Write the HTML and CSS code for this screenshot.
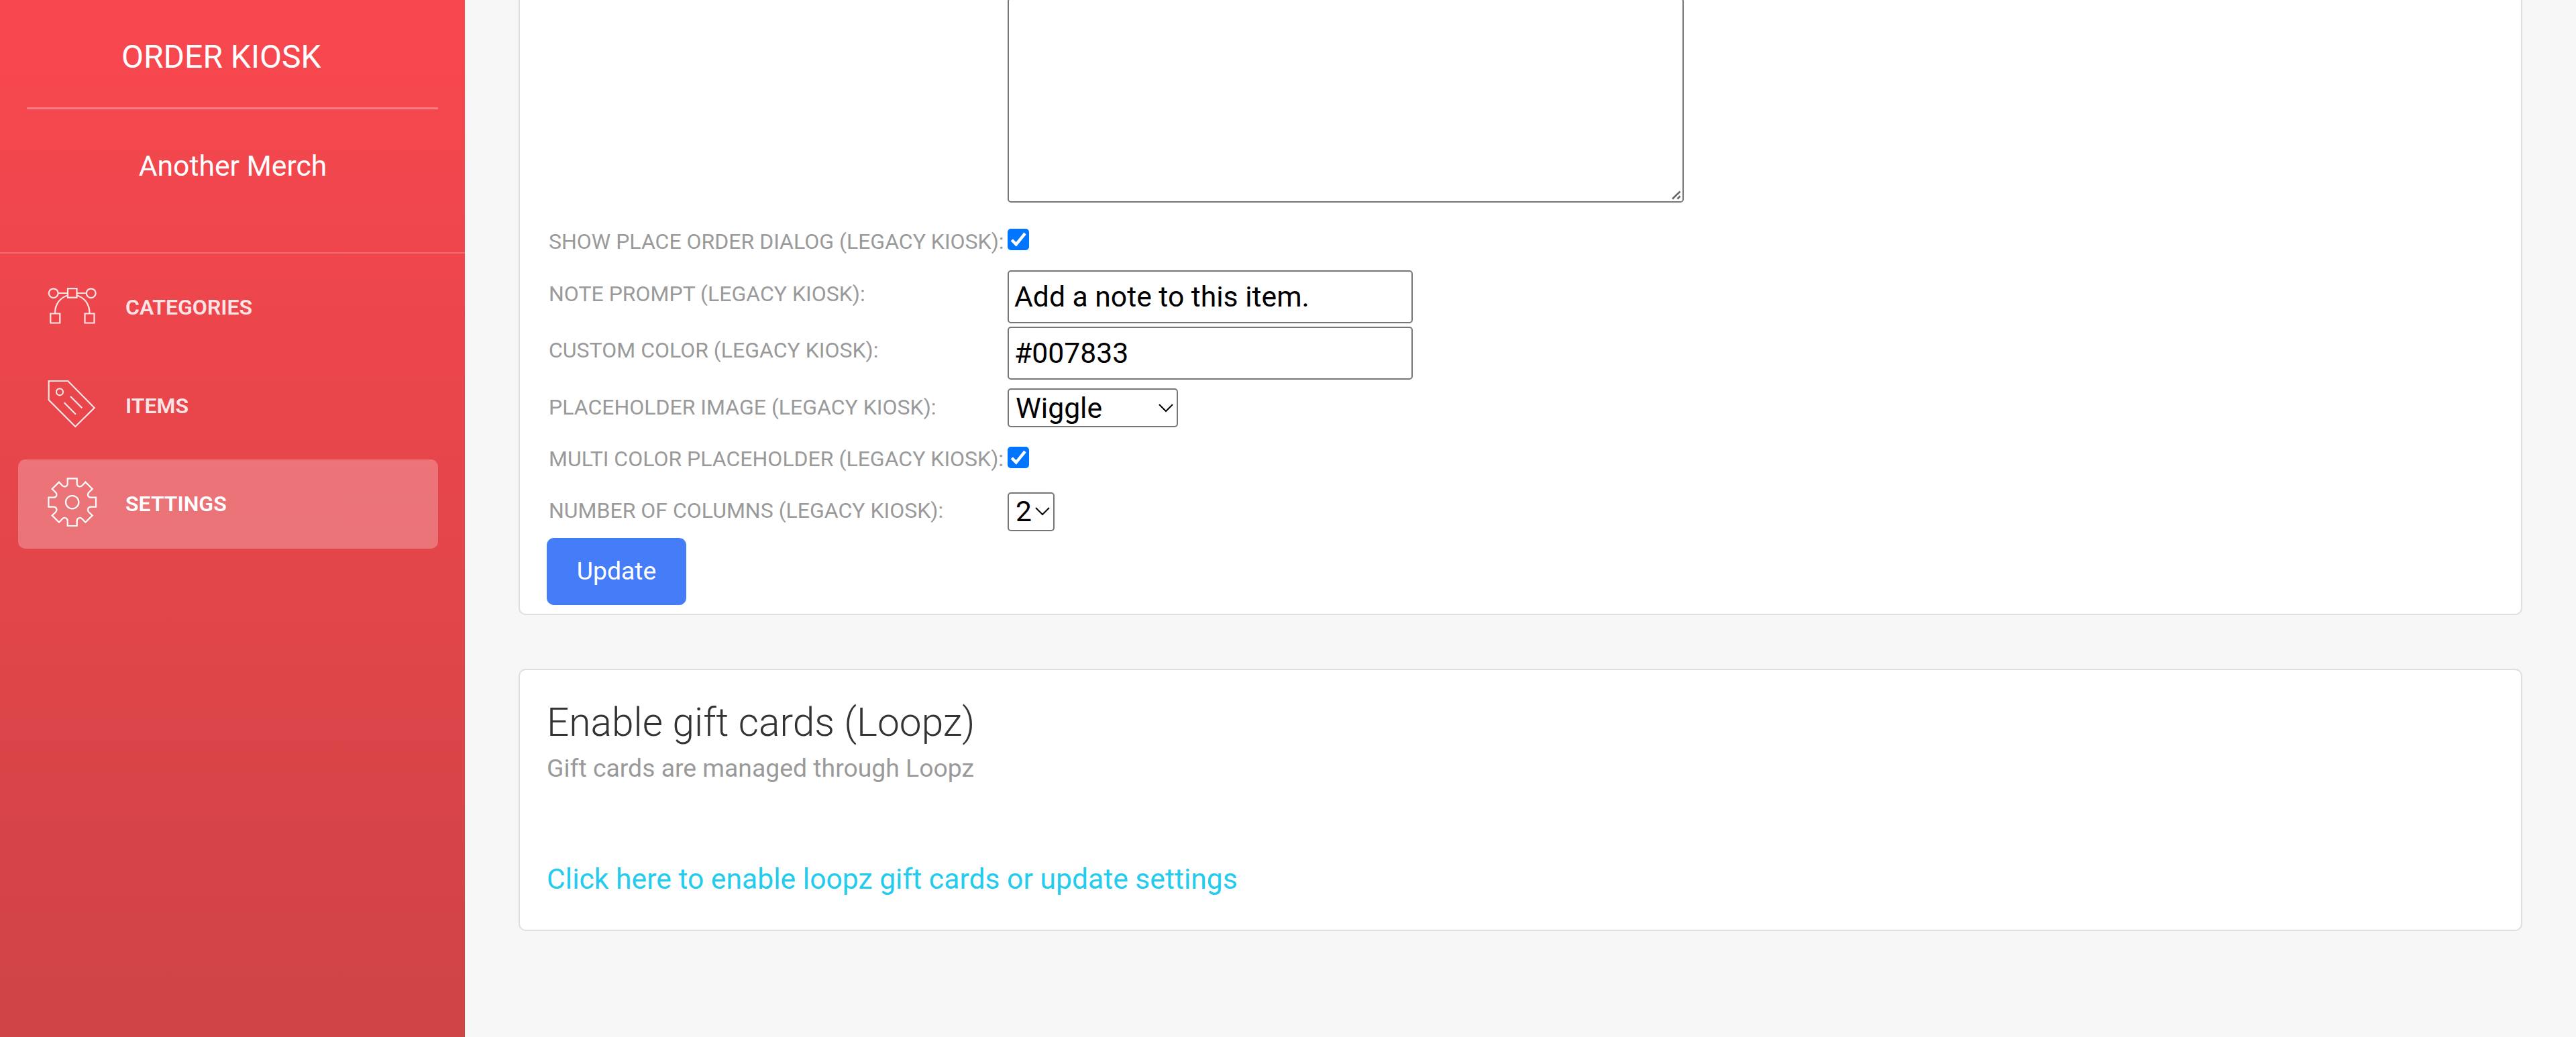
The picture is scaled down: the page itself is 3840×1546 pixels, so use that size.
FILE: index.html
```
<!DOCTYPE html>
<html>
  <head>
    <meta charset="utf-8" />
    <title>Order Kiosk</title>
    <link rel="stylesheet" href="styles.css">
  </head>
  <body>
    <div class="wrapper">
      <div class="sidebar">
        <div class="logo">ORDER KIOSK</div>
        <div class="merchant">Another Merch</div>
        <ul class="nav">
          <li>
            <svg class="icon" viewBox="0 0 74 74">
              <circle cx="8.700" cy="18.200" r="6.900" />
              <circle cx="64.700" cy="18.200" r="6.900" />
              <path d="M15.600 18H30M43.500 18H57.800M30 11.200h13.500v13.500h-13.500z" />
              <path d="M29.500 21.500C18 25 11 35 11 48M44 21.500C55.500 25 62.500 35 62.500 48" />
              <path d="M4.300 48.500h14v14h-14zM55.500 48.500h14v14h-14z" />
            </svg>
            <span>CATEGORIES</span>
          </li>
          <li>
            <svg class="icon" viewBox="0 0 74 74">
              <path d="M1.700 2H30.300L69.700 42L41.300 70L1.700 30.300Z" />
              <circle cx="18" cy="18.300" r="5" />
              <path d="M34 25L51.300 42.300M24.700 34.300L42 51.700" />
            </svg>
            <span>ITEMS</span>
          </li>
          <li class="active">
            <svg class="icon" viewBox="-36.700 -36.700 74 74">
              <path d="M-7 -35.300H7V-28C7 -23 12 -22 15 -25L19.700 -30L30 -19.700L25 -15C22 -12 23 -7 28 -7H35.300V7H28C23 7 22 12 25 15L30 19.700L19.700 30L15 25C12 22 7 23 7 28V35.300H-7V28C-7 23 -12 22 -15 25L-19.700 30L-30 19.700L-25 15C-22 12 -23 7 -28 7H-35.300V-7H-28C-23 -7 -22 -12 -25 -15L-30 -19.700L-19.700 -30L-15 -25C-12 -22 -7 -23 -7 -28Z" />
              <circle cx="0" cy="0" r="9.700" />
            </svg>
            <span>SETTINGS</span>
          </li>
        </ul>
      </div>
      <div class="main">
        <div class="card settings">
          <form class="form">
            <label></label>
            <div class="area">
              <textarea></textarea>
              <svg class="grip" viewBox="0 0 16 16"><path d="M2 13.500L13.500 2.500M9.500 13.500L13.500 9.500" /></svg>
            </div>
            <label class="low">SHOW PLACE ORDER DIALOG (LEGACY KIOSK):</label>
            <svg class="check" viewBox="0 0 32 32"><rect width="32" height="32" rx="5" /><path d="M6.300 16.700L12.700 23.300L26 7" /></svg>
            <label class="high">NOTE PROMPT (LEGACY KIOSK):</label>
            <input type="text" value="Add a note to this item." />
            <label class="high">CUSTOM COLOR (LEGACY KIOSK):</label>
            <input type="text" value="#007833" />
            <label>PLACEHOLDER IMAGE (LEGACY KIOSK):</label>
            <div class="select wide">
              <span>Wiggle</span>
              <svg class="arrow" viewBox="0 0 24 14"><path d="M2 2L12 12L22 2" /></svg>
            </div>
            <label>MULTI COLOR PLACEHOLDER (LEGACY KIOSK):</label>
            <svg class="check" viewBox="0 0 32 32"><rect width="32" height="32" rx="5" /><path d="M6.300 16.700L12.700 23.300L26 7" /></svg>
            <label>NUMBER OF COLUMNS (LEGACY KIOSK):</label>
            <div class="select">
              <span>2</span>
              <svg class="arrow" viewBox="0 0 24 14"><path d="M2 2L12 12L22 2" /></svg>
            </div>
          </form>
          <button class="btn">Update</button>
        </div>
        <div class="card loopz">
          <h4>Enable gift cards (Loopz)</h4>
          <p>Gift cards are managed through Loopz</p>
          <a>Click here to enable loopz gift cards or update settings</a>
        </div>
      </div>
    </div>
  </body>
</html>
```
FILE: styles.css
```
* {
  box-sizing: border-box;
}
body {
  margin: 0;
  font-family: Roboto, "Liberation Sans", sans-serif;
  background-color: #f7f7f8;
  overflow: hidden;
}
.wrapper {
  display: flex;
  height: 1546px;
}
.sidebar {
  width: 693px;
  background: linear-gradient(to bottom, #f9474f 0%, #cf4446 100%);
  color: white;
}
.logo {
  margin: 0 40px;
  height: 163px;
  padding-left: 141px;
  padding-top: 5px;
  line-height: 160px;
  font-size: 48px;
  border-bottom: 3px solid rgba(255, 255, 255, 0.3);
}
.merchant {
  height: 215px;
  padding: 59px 0 0 1px;
  line-height: 50px;
  font-size: 42.67px;
  text-align: center;
  border-bottom: 2px solid rgba(255, 255, 255, 0.2);
}
.nav {
  list-style: none;
  margin: 14px 40px 0 27px;
  padding: 0;
  display: flex;
  flex-direction: column;
  gap: 13.67px;
}
.nav li {
  display: flex;
  height: 133px;
  padding: 27px 0 0 44px;
  border-radius: 10.67px;
  font-size: 32px;
  font-weight: 600;
  line-height: 78px;
  opacity: 0.86;
}
.nav .active {
  background-color: rgba(255, 255, 255, 0.25);
  opacity: 1;
}
.icon {
  width: 74px;
  height: 74px;
  margin-right: 42px;
  fill: none;
  stroke: white;
  stroke-width: 2.2;
}
.main {
  flex: 1;
  padding: 0 80px;
}
.card {
  background-color: white;
  border: 2px solid #dfdfdf;
  border-radius: 10.67px;
}
.settings {
  height: 917px;
  padding: 0 40px;
  border-top: none;
  border-radius: 0 0 10.67px 10.67px;
}
.form {
  display: grid;
  grid-template-columns: 684px auto;
  grid-template-rows: 319px 79px 84px 84px 81px 73px 82px;
  justify-items: start;
  align-items: center;
  padding-left: 3px;
}
.form label {
  font-size: 32px;
  line-height: 40px;
  color: #9a9a9a;
  white-space: nowrap;
}
.form .low {
  margin-top: 2px;
}
.form .high {
  margin-bottom: 4px;
}
.area {
  position: relative;
  align-self: start;
  height: 302px;
}
textarea {
  display: block;
  width: 1008px;
  height: 305px;
  margin: -3px 0 0;
  border: 2px solid #767676;
  border-radius: 5px;
  resize: none;
}
/* resize handle in the corner of the textarea */
.grip {
  position: absolute;
  right: 3px;
  bottom: 3px;
  width: 16px;
  height: 16px;
  fill: none;
  stroke: #666666;
  stroke-width: 2.5;
}
input[type="text"] {
  width: 604px;
  height: 79px;
  margin: 5px 0 0;
  padding: 0 8px 2px;
  border: 2px solid #767676;
  border-radius: 5px;
  font-family: inherit;
  font-size: 42.67px;
  color: black;
}
.check {
  width: 32px;
  height: 32px;
  margin-bottom: 3px;
  fill: #0075ff;
}
.check path {
  fill: none;
  stroke: white;
  stroke-width: 4.5;
}
.select {
  display: flex;
  align-items: center;
  justify-content: space-between;
  width: 70px;
  height: 58px;
  margin-top: 3px;
  padding: 0 4px 1px 10px;
  border: 2px solid #767676;
  border-radius: 5px;
  font-size: 42.67px;
  line-height: 50px;
  color: black;
}
.wide {
  width: 254px;
}
.arrow {
  width: 24px;
  height: 14px;
  fill: none;
  stroke: black;
  stroke-width: 2;
}
.btn {
  display: block;
  width: 208px;
  height: 100px;
  padding: 0 0 3px;
  border: none;
  border-radius: 10.67px;
  background-color: #447df7;
  color: white;
  font-family: inherit;
  font-size: 37.33px;
}
.loopz {
  margin-top: 80px;
  height: 391px;
  padding: 38px 40px 0;
}
.loopz h4 {
  margin: 0;
  font-size: 58.67px;
  line-height: 80px;
  font-weight: 300;
  color: #333333;
}
.loopz p {
  margin: 0;
  font-size: 37.33px;
  line-height: 56px;
  color: #9a9a9a;
}
.loopz a {
  display: block;
  margin-top: 107px;
  font-size: 42.67px;
  line-height: 60px;
  color: #23ccef;
}
```
